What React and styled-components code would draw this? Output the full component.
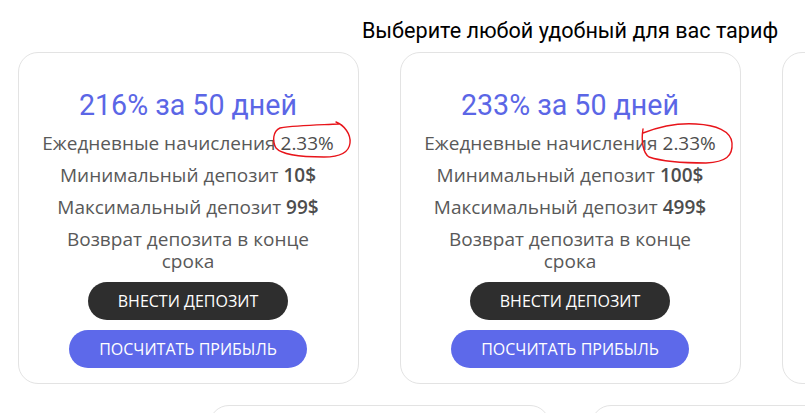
import React from "react";
import styled, { createGlobalStyle } from "styled-components";

const Global = createGlobalStyle`
  html, body { margin: 0; padding: 0; background: #fff; overflow: hidden; }
  body { font-family: "Open Sans", "Liberation Sans", sans-serif; }
`;

const Page = styled.div`
  width: 1106px;
  padding: 17px 0 0 17px;
`;

const Heading = styled.h2`
  margin: 0 0 7px;
  font-family: Roboto, "Liberation Sans", sans-serif;
  font-weight: 400;
  font-size: 21.6px;
  line-height: 28px;
  color: #000;
  text-align: center;
`;

const Grid = styled.div`
  display: flex;
  flex-wrap: wrap;
  justify-content: center;
  column-gap: 41px;
  row-gap: 21px;
`;

const Card = styled.div`
  position: relative;
  box-sizing: border-box;
  width: 341px;
  border: 1px solid #e3e3e3;
  border-radius: 20px;
  padding: 35px 10px 15px;
  display: flex;
  flex-direction: column;
  align-items: center;
  text-align: center;
`;

const Title = styled.h3`
  margin: 0 0 10px;
  font-family: Roboto, "Liberation Sans", sans-serif;
  font-weight: 400;
  font-size: 28.6px;
  line-height: 34px;
  color: #5b66e6;
  white-space: nowrap;
`;

const Line = styled.p`
  margin: 0 0 10px;
  font-size: 19px;
  line-height: 22px;
  color: #595959;
  white-space: ${(p) => (p.$wrap ? "normal" : "nowrap")};
  max-width: ${(p) => (p.$wrap ? "280px" : "none")};
`;

const Value = styled.span`
  font-weight: ${(p) => (p.$bold ? 650 : 500)};
  color: #4d4d4d;
`;

const Button = styled.button`
  box-sizing: border-box;
  height: 38px;
  margin-top: ${(p) => (p.$first ? "0" : "10px")};
  padding: 0 30px;
  border: none;
  border-radius: 19px;
  background: ${(p) => (p.$dark ? "#2e2e2e" : "#5d69ea")};
  color: #fff;
  font-family: "Open Sans", "Liberation Sans", sans-serif;
  font-size: 16px;
  text-transform: uppercase;
  cursor: pointer;
`;

const Scribble = styled.svg`
  position: absolute;
  left: 0;
  top: 0;
  width: 341px;
  height: 130px;
  pointer-events: none;
  overflow: visible;
`;

const loops = [
  "M 317 69 C 325 72, 332 81, 331 90 C 330 100, 321 104, 305 104 C 283 104, 263 102, 257 95 C 253 88, 254 78, 261 75 C 278 72, 298 72, 320 71",
  "M 242 80 C 260 73, 280 70, 295 71 C 315 72, 330 78, 331 90 C 332 103, 325 109, 305 110 C 285 110, 260 108, 248 104 C 242 100, 240 88, 242 76",
];

const plans = [
  { pct: "216", min: "10$", max: "99$", loop: loops[0] },
  { pct: "233", min: "100$", max: "499$", loop: loops[1] },
  { pct: "250", min: "500$", max: "999$" },
  { pct: "266", min: "1000$", max: "4999$" },
  { pct: "283", min: "5000$", max: "9999$" },
];

export default function App() {
  return (
    <>
      <Global />
      <Page>
        <Heading>Выберите любой удобный для вас тариф</Heading>
        <Grid>
          {plans.map((p) => (
            <Card key={p.pct}>
              <Title>{p.pct}% за 50 дней</Title>
              <Line>
                Ежедневные начисления <Value>2.33%</Value>
              </Line>
              <Line>
                Минимальный депозит <Value $bold>{p.min}</Value>
              </Line>
              <Line>
                Максимальный депозит <Value $bold>{p.max}</Value>
              </Line>
              <Line $wrap>Возврат депозита в конце срока</Line>
              <Button $dark $first>Внести депозит</Button>
              <Button>Посчитать прибыль</Button>
              {p.loop && (
                <Scribble viewBox="0 0 341 130">
                  <path d={p.loop} fill="none" stroke="#e8141a" strokeWidth="1.4" strokeLinecap="round" />
                </Scribble>
              )}
            </Card>
          ))}
        </Grid>
      </Page>
    </>
  );
}
